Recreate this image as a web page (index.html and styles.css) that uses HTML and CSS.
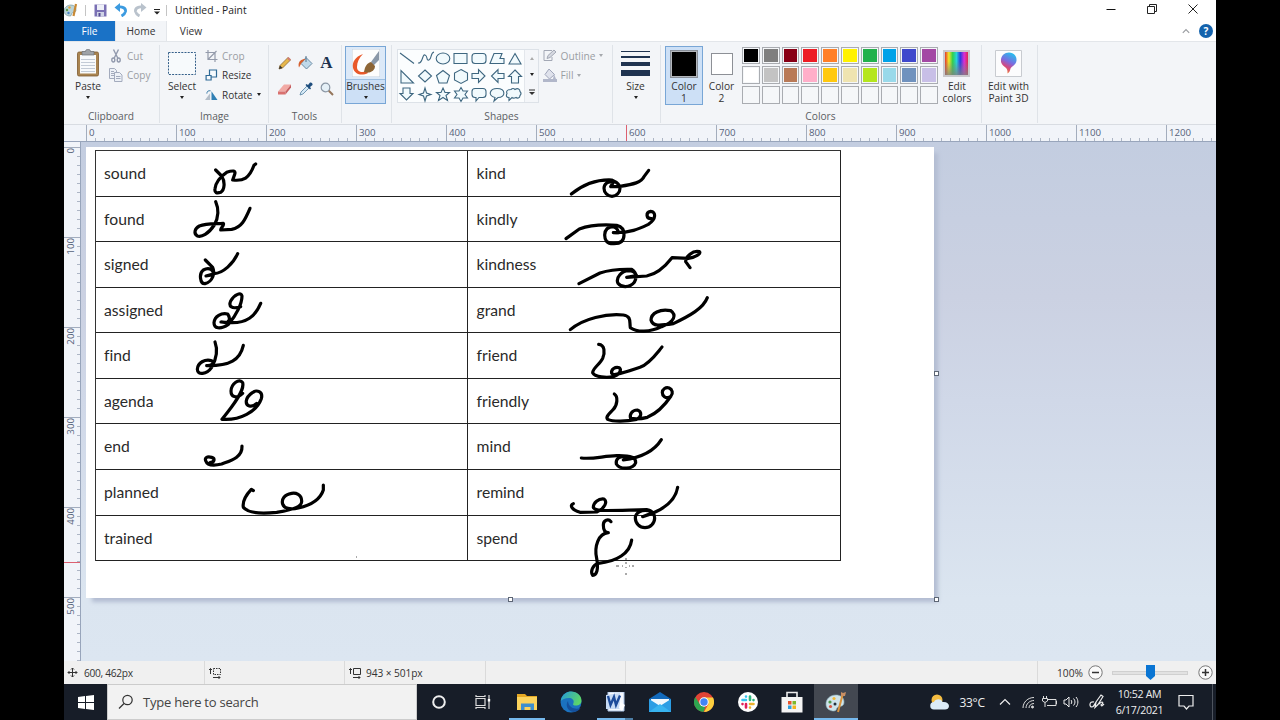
FILE: index.html
```html
<!DOCTYPE html>
<html lang="en">
<head>
  <meta charset="UTF-8">
  <title>Untitled - Paint</title>
  <link rel="stylesheet" href="styles.css">
</head>
<body>
<div class="window">
  <header class="titlebar">
    <svg class="app-icon" width="14" height="14" viewBox="0 0 14 14"><path d="M7 2C3 2 0 5 0 8s3 5 6 5c2 0 1-2 2-3s4 0 4-3-2-5-5-5z" fill="#b9d3d8" stroke="#7d9ba3" stroke-width=".7"/><circle cx="3" cy="7" r="1.2" fill="#5e9d50"/><circle cx="5.500" cy="4.500" r="1.200" fill="#e2a33a"/><circle cx="4.500" cy="10" r="1.200" fill="#4a83c4"/><path d="M12 1L9.500 13" stroke="#c98a35" stroke-width="2.200"/></svg>
    <span class="divider"></span>
    <svg class="save" width="13" height="13" viewBox="0 0 13 13"><path d="M.5.5h12v12h-12z" fill="#7a70b4"/><path d="M3 .5h7v5.500H3z" fill="#eef0f8"/><path d="M3 8h7v4.500H3z" fill="#cfd3e6"/><path d="M4.500 9h2v3.500h-2z" fill="#554b91"/></svg>
    <svg class="undo" width="14" height="14" viewBox="0 0 14 14"><path d="M3 4.500c5-1.500 9 .5 8.500 4-.5 2-2 3.500-4 4.500" fill="none" stroke="#3c9be0" stroke-width="2.800"/><path d="M6 0L.5 4.500 6 9z" fill="#3c9be0"/></svg>
    <svg class="redo" width="14" height="14" viewBox="0 0 14 14"><path d="M11 4.500c-5-1.500-9 .5-8.500 4 .5 2 2 3.500 4 4.500" fill="none" stroke="#b9c2cc" stroke-width="2.800"/><path d="M8 0l5.500 4.500L8 9z" fill="#b9c2cc"/></svg>
    <svg class="more" width="6" height="6" viewBox="0 0 6 6"><path d="M0 .5h6" stroke="#222"/><path d="M0 2.500h6L3 5.500z" fill="#222"/></svg>
    <span class="divider"></span>
    <span class="title">Untitled - Paint</span>
    <div class="controls">
      <svg width="10" height="10" viewBox="0 0 10 10"><path d="M.5 5.500h9" stroke="#111"/></svg>
      <svg width="10" height="10" viewBox="0 0 10 10" fill="none" stroke="#222"><path d="M.5 2.500h7v7h-7z"/><path d="M2.500 2.500v-2h7v7h-2"/></svg>
      <svg width="10" height="10" viewBox="0 0 10 10"><path d="M.5.5l9 9M9.500.5l-9 9" stroke="#222"/></svg>
    </div>
  </header>

  <nav class="tabs">
    <span class="tab file">File</span>
    <span class="tab home">Home</span>
    <span class="tab view">View</span>
    <svg class="collapse" width="8" height="6" viewBox="0 0 8 6"><path d="M.8 4.800L4 1.600l3.200 3.200" fill="none" stroke="#9a9da1" stroke-width="1.200"/></svg>
    <span class="help">?</span>
  </nav>

  <section class="ribbon">
    <div class="group clipboard">
      <div class="group-body">
        <div class="big paste">
          <div class="big-icon"><svg width="24" height="30" viewBox="0 0 24 30"><rect x="1.500" y="3" width="21" height="24" rx="1.500" fill="#a98451" stroke="#7e5a30" stroke-width=".8"/><path d="M4 6h16v18.500H4z" fill="#f8fafc"/><path d="M5 10.500h14M5 13.500h14M5 16.500h14M5 19.500h14M5 22.500h14" stroke="#c3cbd6"/><path d="M6 2.500h3.500c0-3 5-3 5 0H18V6H6z" fill="#9fa3a8" stroke="#6b6e73" stroke-width=".7"/></svg></div>
          <span>Paste</span><i class="arrow"></i>
        </div>
        <div class="rows">
          <div class="row disabled"><svg width="14" height="14" viewBox="0 0 14 14" fill="none" stroke="#9199ad" stroke-width="1.400"><path d="M4.500.5L9 9.500M9.500.5L5 9.500"/><ellipse cx="4.300" cy="11" rx="1.500" ry="2"/><ellipse cx="9.700" cy="11" rx="1.500" ry="2"/></svg>Cut</div>
          <div class="row disabled"><svg width="14" height="14" viewBox="0 0 14 14" fill="#edf1f7" stroke="#a3abbd"><path d="M.5.500h5l2 2v8h-7z"/><path d="M2 3.500h3M2 5.500h3M2 7.500h3"/><path d="M5.500 4.500h5l2.500 2.500v6.500H5.500z"/><path d="M7 8.500h4.500M7 10.500h4.500"/></svg>Copy</div>
        </div>
      </div>
      <div class="group-name">Clipboard</div>
    </div>

    <div class="group image">
      <div class="group-body">
        <div class="big select">
          <div class="big-icon"><svg width="28" height="23" viewBox="0 0 28 23"><rect x=".5" y=".5" width="27" height="22" fill="#f7fafc" stroke="#35608a" stroke-dasharray="2 1.200"/></svg></div>
          <span>Select</span><i class="arrow"></i>
        </div>
        <div class="rows">
          <div class="row disabled"><svg width="12" height="12" viewBox="0 0 12 12" fill="none" stroke="#949bab" stroke-width="1.200"><path d="M2.500 0v9.500H12M0 2.500h9.500V12M2.500 9.500L11 1"/></svg>Crop</div>
          <div class="row"><svg width="12" height="12" viewBox="0 0 12 12" fill="#f6fafd" stroke="#2e6a96" stroke-width="1.200"><path d="M4 1h7v7H4z"/><path d="M.6 6.500h5v4.500h-5z"/></svg>Resize</div>
          <div class="row"><svg width="14" height="12" viewBox="0 0 14 12"><path d="M0 11.500h5.500V4z" fill="#b4bec9"/><path d="M7 11.500V2l6.500 9.500z" fill="#2f7fb4"/><path d="M2 4.500c0-2.500 1.500-3.500 4-3" fill="none" stroke="#3477a5"/></svg>Rotate<i class="arrow"></i></div>
        </div>
      </div>
      <div class="group-name">Image</div>
    </div>

    <div class="group tools">
      <div class="group-body tool-grid">
        <svg width="14" height="14" viewBox="0 0 14 14"><path d="M1 13l1-3.500 8-8 2.500 2.500-8 8z" fill="#e7b74b" stroke="#8b6a3a" stroke-width=".8"/><path d="M1 13l1-3.500L4.500 12z" fill="#333"/><path d="M10.500 1L13 3.500 11.500 5 9 2.500z" fill="#cf7e74"/></svg>
        <svg width="15" height="14" viewBox="0 0 15 14"><path d="M8 1.500l6 6-5.500 5.500L3 7.500z" fill="#bfd9ea" stroke="#5e7f9a" stroke-width=".9"/><path d="M1 11.500C-.5 7 2 3 7.500 3L3.500 7z" fill="#d5602e"/><path d="M8 0v6" stroke="#56758c"/></svg>
        <span class="letter">A</span>
        <svg width="15" height="14" viewBox="0 0 15 14"><path d="M1 9.500L7 2.500h7L8.500 9.500z" fill="#f2aaa5"/><path d="M1 9.500h7.500v3H1z" fill="#d9716f"/><path d="M8.500 9.500L14 2.500v3l-5.500 7z" fill="#c65f60"/></svg>
        <svg width="14" height="14" viewBox="0 0 14 14"><path d="M1 13l1-3L8 4l2 2-6 6z" fill="#d5e9f6" stroke="#54809f" stroke-width=".8"/><path d="M6.500 3L11 7.500 12 6.500l-1-1.500 2.500-2C14 1.500 12.500 0 11 .5L9 3 7.500 2z" fill="#1f4e7e"/></svg>
        <svg width="14" height="14" viewBox="0 0 14 14"><circle cx="5.500" cy="5.500" r="4.300" fill="#e5f0f7" stroke="#8b97a5" stroke-width="1.200"/><path d="M8.800 8.800L13 13" stroke="#94755b" stroke-width="2"/></svg>
      </div>
      <div class="group-name">Tools</div>
    </div>

    <div class="group brushes">
      <div class="group-body">
        <div class="big active">
          <div class="big-icon"><svg width="28" height="28" viewBox="0 0 28 28"><path d="M0 0h28v28H0z" fill="#fdfdfd" stroke="#c3cfdc"/><path d="M11 5C3 8 0 13 1 19c2 7 9 8 15 5l-1-2c-5 2-10 1-10-4s2-9 6-13z" fill="#e9592b"/><path d="M19 13l8-11v9l-6 6z" fill="#8b98a8"/><path d="M12 23c1-6 3-9 7-10l4 4c0 4-4 8-11 6z" fill="#8d6535"/></svg></div>
          <span>Brushes</span><i class="arrow"></i>
        </div>
      </div>
    </div>

    <div class="group shapes">
      <div class="group-body">
        <div class="gallery">
          <!-- 7 x 3 shapes, one every 18px -->
          <svg class="shape-list" width="126" height="54" viewBox="0 0 126 54" fill="#f1fafd" stroke="#3e6780" stroke-width="1.100">
            <path d="M2 3l14 10.500"/>
            <path d="M20 13c5 1 4-9 7-8s1 6 4 5 1-7 5-8" fill="none"/>
            <ellipse cx="45" cy="8.500" rx="6.800" ry="5.500"/>
            <path d="M56 3.500h13v10H56z"/>
            <rect x="74" y="3.500" width="14" height="10" rx="3"/>
            <path d="M92 13.500l4-10h8l-2 5h4v5z"/>
            <path d="M117 3.500l6 10.500h-12z"/>
            <path d="M3 20.500v12.500h12.500z"/>
            <path d="M27 20l6.500 6-6.500 6-6.500-6z"/>
            <path d="M45 20.500l6.500 5-2.500 7.500h-8l-2.500-7.500z"/>
            <path d="M63 19.500l6.500 3.500v7L63 33.500l-6.500-3.500v-7z"/>
            <path d="M74 23.500h6.500v-4l6.500 6.500-6.500 6.500v-4H74z"/>
            <path d="M106 23.500h-6v-4L93.500 26l6.500 6.500v-4h6z"/>
            <path d="M117 20l6.500 6.500h-3V33h-7v-6.500h-3z"/>
            <path d="M5 38h7v5.500h3L8.500 50 2 43.500h3z"/>
            <path d="M27 38l1.500 5L33 44.500 28.500 46 27 51l-1.500-5-4.500-1.500 4.500-1.500z"/>
            <path d="M45 38l2 4.500h4.500L48 45.500l1.500 5-4.500-3-4.500 3 1.500-5-3.500-3H43z"/>
            <path d="M63 37.500l2 3.500h4.500l-2.500 3.500 2.500 3.500H65l-2 3.500-2-3.500h-4.500l2.500-3.500-2.500-3.500H61z"/>
            <path d="M77 38.500h8q3 0 3 3v3q0 3-3 3h-4l-3 3.500v-3.500h-1q-3 0-3-3v-3q0-3 3-3z"/>
            <path d="M97 47.500c-8-2-5-9 2-9 9 0 9 9 1 9l-4 3.500z"/>
            <path d="M113 39.500c2-2 3-1 4 0 3-2 5 0 5 2 2 2 1 3 0 4 0 3-3 3-4 2-2 1-3 1-4 0l-3 3v-3c-3 0-3-2-2-4-1-2 0-4 4-4z"/>
          </svg>
          <div class="scroll">
            <i class="arrow up"></i><i class="arrow"></i><svg width="6" height="7" viewBox="0 0 6 7"><path d="M0 1h6" stroke="#333"/><path d="M0 3h6L3 6z" fill="#333"/></svg>
          </div>
        </div>
        <div class="rows">
          <div class="row disabled"><svg width="14" height="13" viewBox="0 0 14 13" fill="none" stroke="#a3a8b5"><path d="M9 1.500H1v10h8V8"/><path d="M4 9.500l1-3L11 1l2 2-6 5.500z" fill="#d6d9e1"/></svg>Outline<i class="arrow"></i></div>
          <div class="row disabled"><svg width="14" height="14" viewBox="0 0 14 14"><path d="M6 1l5.500 5.500L6.500 11 2 6.500z" fill="#dfe2ec" stroke="#a0a6ba"/><path d="M0 11h14v3H0zM11 6l2 5h-3z" fill="#b1b7ca"/></svg>Fill<i class="arrow"></i></div>
        </div>
      </div>
      <div class="group-name">Shapes</div>
    </div>

    <div class="group size">
      <div class="group-body">
        <div class="big">
          <div class="big-icon"><svg width="29" height="26" viewBox="0 0 29 26" fill="#1f3350"><path d="M0 0h29v1H0zM0 5h29v2H0zM0 11h29v4H0zM0 19h29v6H0z"/></svg></div>
          <span>Size</span><i class="arrow"></i>
        </div>
      </div>
    </div>

    <div class="group colors">
      <div class="group-body">
        <div class="big color-one active">
          <div class="big-icon"><b class="chip black"></b></div>
          <span>Color<br>1</span>
        </div>
        <div class="big color-two">
          <div class="big-icon"><b class="chip white"></b></div>
          <span>Color<br>2</span>
        </div>
        <div class="palette">
          <i></i><i></i><i></i><i></i><i></i><i></i><i></i><i></i><i></i><i></i>
          <i></i><i></i><i></i><i></i><i></i><i></i><i></i><i></i><i></i><i></i>
          <i></i><i></i><i></i><i></i><i></i><i></i><i></i><i></i><i></i><i></i>
        </div>
        <div class="big edit-colors">
          <div class="big-icon"><b class="rainbow"></b></div>
          <span>Edit<br>colors</span>
        </div>
      </div>
      <div class="group-name">Colors</div>
    </div>

    <div class="group paint3d">
      <div class="group-body">
        <div class="big">
          <div class="big-icon"><svg width="27" height="27" viewBox="0 0 27 27"><defs><linearGradient id="drop" x1=".7" y1="0" x2=".3" y2="1"><stop offset="0" stop-color="#22c3ee"/><stop offset=".45" stop-color="#7a6be0"/><stop offset=".7" stop-color="#d4467f"/><stop offset="1" stop-color="#f08a32"/></linearGradient></defs><path d="M.5.500h26v26H.5z" fill="#fcfcfd" stroke="#c8cbd0"/><path d="M14 2.500c5 0 8 4 7.500 8-.5 5-5 5.500-6 8-.5 2-1 4-3 5 0-3 0-4-2-6-2.500-2-5-4-4.500-8C6.500 5.500 9.500 2.500 14 2.500z" fill="url(#drop)"/></svg></div>
          <span>Edit with<br>Paint 3D</span>
        </div>
      </div>
    </div>
  </section>

  <div class="ruler-x">
    <span>0</span><span>100</span><span>200</span><span>300</span><span>400</span><span>500</span><span class="mark">600</span><span>700</span><span>800</span><span>900</span><span>1000</span><span>1100</span><span>1200</span>
  </div>

  <main class="workspace">
    <div class="ruler-y">
      <span><b>0</b></span><span><b>100</b></span><span><b>200</b></span><span><b>300</b></span><span class="mark"><b>400</b></span><span><b>500</b></span>
    </div>
    <div class="stage">
      <div class="canvas">
        <div class="words">
          <div>sound</div><div>kind</div>
          <div>found</div><div>kindly</div>
          <div>signed</div><div>kindness</div>
          <div>assigned</div><div>grand</div>
          <div>find</div><div>friend</div>
          <div>agenda</div><div>friendly</div>
          <div>end</div><div>mind</div>
          <div>planned</div><div>remind</div>
          <div>trained</div><div>spend</div>
        </div>
        <!-- brush strokes -->
        <svg class="ink" width="848" height="451" viewBox="86 147 848 451">
          <g transform="translate(60 140) scale(.33333)">
            <path d="M467 90L485 108C496 125 494 150 482 157C470 161 463 158 465 146C466 130 480 110 500 97C520 90 528 92 524 103L518 120C550 124 568 115 582 76L587 72"/>
            <path d="M467 185C478 210 474 235 463 255C445 282 425 292 412 288C400 280 404 266 418 258C440 250 470 252 490 250C494 256 482 262 482 270L515 268C545 262 555 240 570 205"/>
            <path d="M436 360L458 382C466 400 458 425 435 431C420 432 416 400 430 390C448 380 462 390 460 404L438 408L462 401C490 400 520 370 533 341"/>
            <path d="M542 500C515 508 505 500 512 483C524 462 544 456 546 468C546 490 530 525 505 553C480 570 462 565 462 548C464 528 484 518 503 522C512 535 508 545 500 548L483 546L510 548C560 550 585 530 602 490"/>
          </g>
          <g transform="translate(60 350) scale(.33333)">
            <path d="M465 -24C474 0 470 25 455 52C440 74 412 76 412 58C413 38 435 26 455 32C465 40 455 48 440 47C510 48 540 30 550 -14"/>
            <path d="M548 130C528 148 513 140 513 123C514 100 538 84 548 98C554 120 525 160 486 208C540 212 590 185 604 146C610 124 590 118 577 128C554 144 555 164 568 168C576 170 584 166 590 160"/>
            <path d="M450 338C464 337 466 325 455 322C440 318 434 324 437 332C442 347 460 348 485 342C505 334 548 325 546 288"/>
            <path d="M580 422L574 418C555 438 547 455 550 472C565 492 620 490 650 487C695 480 725 470 725 455C726 432 706 428 695 430C672 434 664 448 668 462C672 475 690 480 715 474C755 465 782 445 790 420L790 405"/>
          </g>
          <g transform="translate(460 145) scale(.33333)">
            <path d="M334 147C370 118 410 103 455 105C467 110 480 118 480 130a24 24 0 1 1 -48 0C432 118 442 107 460 112L452 125L480 124C520 118 545 112 552 95L566 76"/>
            <path d="M318 281L358 252C390 240 430 238 470 241C486 245 493 255 492 270C492 288 480 296 462 296C440 297 434 285 434 270C435 252 445 245 460 245C475 250 475 260 475 264L460 263C510 265 540 250 565 238C590 222 588 200 572 199C556 202 558 222 575 221"/>
            <path d="M357 416L420 384C450 374 480 372 515 373C528 382 532 395 523 412C508 430 484 428 474 415C466 398 485 378 505 377C520 377 525 382 530 392L500 397L560 393C590 387 615 365 636 338L685 340C705 338 725 325 718 320C698 315 677 335 677 350L690 368"/>
            <path d="M331 554C370 520 440 505 490 510C515 514 508 530 511 548C530 562 570 562 605 545C645 530 650 510 632 497C600 490 573 505 573 525C578 545 600 542 640 536C690 512 730 490 742 458"/>
          </g>
          <g transform="translate(460 350) scale(.33333)">
            <path d="M416 -17C435 -15 435 8 428 25C420 42 398 55 398 68C405 82 440 84 460 80C478 75 486 60 478 53C466 49 452 58 455 70C460 80 500 65 540 52C570 40 590 10 606 -9"/>
            <path d="M463 132C475 140 472 165 460 178C450 190 435 200 443 208C460 216 500 214 530 208C546 200 546 185 532 180C515 180 508 195 512 205C530 208 550 205 562 202C590 190 615 165 633 138a15 15 0 1 0 -6 4"/>
            <path d="M364 324C400 328 430 318 470 317C516 316 528 324 527 338C520 358 480 360 469 342C466 325 480 318 495 320L515 322L490 330C550 322 585 300 604 269"/>
            <path d="M340 461C328 465 335 480 360 487L410 486C435 475 443 455 432 447C415 445 400 458 400 472C405 485 430 482 560 479C576 482 584 492 584 504a29 29 0 1 1 -58 0C526 488 545 478 565 482L578 488L548 500C600 485 645 460 653 412"/>
            <path d="M453 515C445 505 430 510 430 525C430 540 435 548 445 548C415 550 402 590 410 625C416 660 410 675 398 676C390 665 398 645 415 640C470 635 510 610 515 570"/>
          </g>
          <path class="dots" d="M356 557h1M616 566h3M622 566h1M629 566h1M632 566h2M626 558v2M626 562v2M626 567v1M626 573v2"/>
        </svg>
        <b class="handle right"></b>
        <b class="handle bottom"></b>
        <b class="handle corner"></b>
      </div>
    </div>
  </main>

  <footer class="status">
    <div class="cell position"><svg width="11" height="11" viewBox="0 0 11 11" fill="none" stroke="#333"><path d="M5.500 1v9M1 5.500h9M4 2.500L5.500 1 7 2.500M4 8.500L5.500 10 7 8.500M2.500 4L1 5.500 2.500 7M8.500 4L10 5.500 8.500 7"/></svg>600, 462px</div>
    <div class="cell selection"><svg width="13" height="12" viewBox="0 0 13 12" fill="none" stroke="#333"><path d="M1.500 7V1.500M0 3l1.500-1.500L3 3M4 10.500h7M9.500 9l1.500 1.500L9.500 12"/><path d="M4.500 1.500h7v6h-7z" stroke-dasharray="1.500 1"/></svg></div>
    <div class="cell dimension"><svg width="13" height="12" viewBox="0 0 13 12" fill="none" stroke="#333"><path d="M1.500 7V1.500M0 3l1.500-1.500L3 3M4 10.500h7M9.500 9l1.500 1.500L9.500 12M4.500 1.500h7v6h-7z"/></svg>943 × 501px</div>
    <div class="cell empty"></div>
    <div class="cell rest"></div>
    <div class="zoom">
      <span>100%</span>
      <svg width="15" height="15" viewBox="0 0 15 15" fill="#fafafa" stroke="#777"><circle cx="7.500" cy="7.500" r="6.700"/><path d="M4 7.500h7" stroke="#333" stroke-width="1.500"/></svg>
      <div class="slider"><svg width="9" height="15" viewBox="0 0 9 15"><path d="M0 0h9v11l-4.500 4L0 11z" fill="#0a75d3"/></svg></div>
      <svg width="15" height="15" viewBox="0 0 15 15" fill="#fafafa" stroke="#777"><circle cx="7.500" cy="7.500" r="6.700"/><path d="M4 7.500h7M7.500 4v7" stroke="#333" stroke-width="1.500"/></svg>
    </div>
  </footer>

  <div class="taskbar">
    <div class="start"><svg width="16" height="15" viewBox="0 0 16 15" fill="#fff"><path d="M0 2l7-1v6H0zM8 .9L16 0v7H8zM0 8h7v6l-7-1zM8 8h8v7l-8-1z"/></svg></div>
    <div class="search"><svg width="16" height="16" viewBox="0 0 16 16" fill="none" stroke="#333" stroke-width="1.200"><circle cx="9.500" cy="6" r="4.700"/><path d="M6 9.500l-5 5"/></svg>Type here to search</div>
    <div class="task"><svg width="16" height="16" viewBox="0 0 16 16"><circle cx="8" cy="8" r="5.800" fill="none" stroke="#eee" stroke-width="2"/></svg></div>
    <div class="task"><svg width="16" height="16" viewBox="0 0 16 16" fill="none" stroke="#ddd" stroke-width="1.200"><path d="M1 4.500h9v7H1zM1 1v1.500h9V1M1 15v-1.500h9V15M14 1v14"/><path d="M12.800 5h2.400v2.500h-2.400z" fill="#fff" stroke="none"/></svg></div>
    <div class="task open"><svg width="20" height="18" viewBox="0 0 20 18"><path d="M0 1h8l2 2h10v14H0z" fill="#e5a823"/><path d="M0 4h20v13H0z" fill="#fbd35d"/><path d="M4 17v-6.500h13V17h-3.500v-3h-6v3z" fill="#3d8fce"/></svg></div>
    <div class="task"><svg width="22" height="22" viewBox="0 0 22 22"><defs><linearGradient id="edge" x1="0" y1="0" x2="1" y2=".4"><stop offset="0" stop-color="#2499dc"/><stop offset="1" stop-color="#5bd56b"/></linearGradient></defs><circle cx="11" cy="11" r="10.500" fill="#1b72bf"/><path d="M.7 10C2 3 7 .5 11 .5c6 0 10.500 4 10.500 9 0 4-3.500 5.500-7 5-2-.3-1.500-1.500-1-2.500 1-3-1.500-5-4.500-5C5 7 2 8.500.7 10z" fill="url(#edge)"/><path d="M8 10c-3 4-.5 10 5.500 11 3 0 6-2 7-4-5 2-12 0-12.500-7z" fill="#15509c"/></svg></div>
    <div class="task open word"><svg width="20" height="20" viewBox="0 0 20 20"><path d="M3 0h16v19H3z" fill="#f6f9fe" stroke="#aec6e8"/><path d="M1 3l14-2v16L1 17z" fill="#c7daf4"/><path d="M3 4l2.500 9L9 5l2 8 4-9.500" fill="none" stroke="#1d4b9a" stroke-width="2.400"/><path d="M15 10l5 3-3 6-3-3z" fill="#fff"/></svg></div>
    <div class="task"><svg width="22" height="20" viewBox="0 0 22 20"><path d="M0 7l11-7 11 7v13H0z" fill="#1269ba"/><path d="M2 7h18v9H2z" fill="#f0f7fc"/><path d="M0 7l11 7 11-7v13H0z" fill="#2b9de4"/><path d="M0 20l11-8 11 8z" fill="#38b4f0"/></svg></div>
    <div class="task"><svg width="20" height="20" viewBox="0 0 20 20"><circle cx="10" cy="10" r="10" fill="#e24435"/><path d="M10 5.500h9A10 10 0 0 1 10 20l4.500-8z" fill="#fdcf3e"/><path d="M1.300 5l5 8 5 2L9.500 20A10 10 0 0 1 1.300 5z" fill="#2da550"/><circle cx="10" cy="10" r="4.700" fill="#fff"/><circle cx="10" cy="10" r="3.700" fill="#4285f4"/></svg></div>
    <div class="task"><svg width="20" height="20" viewBox="0 0 20 20"><circle cx="10" cy="10" r="10" fill="#fff"/><g stroke-width="2.600" stroke-linecap="round"><path d="M8 4.500v.1M4.500 8H8" stroke="#36c5f0"/><path d="M15.500 8v.1M12 4.500V8" stroke="#2eb67d"/><path d="M12 15.500v.1M12 12h3.500" stroke="#ecb22e"/><path d="M4.500 12v.1M8 12v3.500" stroke="#e01e5a"/></g></svg></div>
    <div class="task"><svg width="22" height="22" viewBox="0 0 22 22"><path d="M6 7V1.500h10V7" fill="none" stroke="#eee" stroke-width="1.600"/><path d="M.5 6h21v15.500H.5z" fill="#f4f4f4"/><path d="M7 10h3.500v3.500H7z" fill="#e8542c"/><path d="M11.500 10H15v3.500h-3.500z" fill="#7db82b"/><path d="M7 14.500h3.500V18H7z" fill="#2e9fdc"/><path d="M11.500 14.500H15V18h-3.500z" fill="#f4b41d"/></svg></div>
    <div class="task open current"><svg width="22" height="22" viewBox="0 0 22 22"><path d="M11 4C5 4 1 8 1 13s4 7 8 7c3 0 2-3 4-4s6 0 6-5-4-7-8-7z" fill="#cfe4ea" stroke="#8fb3bf" stroke-width=".6"/><circle cx="5" cy="11" r="1.600" fill="#4f9a4c"/><circle cx="9" cy="7.500" r="1.600" fill="#f0b93b"/><circle cx="5.500" cy="15.500" r="1.600" fill="#d95742"/><circle cx="10" cy="13" r="1.500" fill="#24323c"/><path d="M17.500 4L13 21" stroke="#d9943f" stroke-width="2"/><path d="M16 5V1l2 1 3-1-1 4z" fill="#c98f63"/></svg></div>
    <div class="tray">
      <svg class="weather" width="20" height="16" viewBox="0 0 20 16"><circle cx="7" cy="6" r="5.500" fill="#f5bd41"/><path d="M4 15.500a3.700 3.700 0 0 1 0-7.500c1-3 7-4 8.500 0 4-.5 6.500 1.500 6.500 4s-2 3.500-4 3.500z" fill="#dcebf7"/></svg>
      <span class="temp">33°C</span>
      <svg class="chevron" width="12" height="8" viewBox="0 0 12 8"><path d="M1 6.500l5-5 5 5" fill="none" stroke="#eee" stroke-width="1.200"/></svg>
      <svg class="wifi" width="13" height="13" viewBox="0 0 13 13" fill="none" stroke="#ddd"><path d="M1 12C1 6 6 1.500 12 1.500M4 12c0-4 3.500-7.500 8-7.500M7 12c0-2.500 2-4.500 5-4.500"/><circle cx="10.500" cy="11" r="1" fill="#ddd"/></svg>
      <svg class="battery" width="16" height="12" viewBox="0 0 16 12" fill="none" stroke="#ddd"><path d="M6 3.500h8v6H5M14.500 5v3M1.500 0v2.500M4.500 0v2.500M.5 2.500h5V5L3 6.500.5 5zM3 6.500V11"/></svg>
      <svg class="sound" width="16" height="12" viewBox="0 0 16 12" fill="none" stroke="#eee"><path d="M1 4h2l3-3v10L3 8H1zM8 4c1 1 1 3 0 4M10.500 2.500c2 2 2 5 0 7M13 1c2.500 3 2.500 7 0 10"/></svg>
      <svg class="pen" width="16" height="16" viewBox="0 0 16 16" fill="none" stroke="#eee" stroke-width="1.200"><path d="M5 8c-5-1-5 5-2 5 2 0 2-2 4-5l5-7 2 1.500-5 8-3 3 1-5M10 10c4-4 5-1 2 1 1 2 2 0 3-1"/></svg>
      <div class="clock">10:52 AM<br>6/17/2021</div>
      <svg class="notice" width="16" height="16" viewBox="0 0 16 16"><path d="M1 1.500h14v10.500h-4l-2.500 3-2.500-3H1z" fill="none" stroke="#eee" stroke-width="1.200"/></svg>
      <span class="show-desktop"></span>
    </div>
  </div>
</div>
</body>
</html>
```
FILE: styles.css
```css
* {
  box-sizing: border-box;
  padding: 0;
  margin: 0;
}

body {
  height: 720px;
  overflow: hidden;
  background-color: #000;
  font-family: "Open Sans", "Noto Sans", sans-serif;
  font-size: 10.2px;
  color: #333;
}

svg {
  display: block;
  flex: none;
}

.window {
  display: flex;
  flex-direction: column;
  width: 1152px;
  height: 720px;
  margin: 0 auto;
  background-color: #fff;
}

/* title bar */
.titlebar {
  display: flex;
  align-items: center;
  height: 21px;
  padding-bottom: 1px;
}

.app-icon {
  margin-right: 7px;
}

.divider {
  width: 1px;
  height: 11px;
  background-color: #c4c4c4;
}

.save {
  margin-left: 8px;
}

.undo {
  margin-left: 7px;
}

.redo {
  margin-left: 5px;
}

.more {
  margin: 3px 6px 0 7px;
}

.title {
  margin-left: 8px;
  color: #222;
  font-size: 10.3px;
}

.controls {
  display: flex;
  gap: 31px;
  margin: -2px 18px 0 auto;
}

/* tabs */
.tabs {
  display: flex;
  align-items: center;
  height: 20px;
}

.tab {
  height: 20px;
  line-height: 20px;
  text-align: center;
}

.file {
  width: 51px;
  background-color: #1a72c6;
  color: #fff;
}

.home {
  width: 52px;
  height: 21px;
  background-color: #f3f5f8;
  border: 1px solid #e3e6ea;
  border-width: 0 1px;
}

.view {
  width: 48px;
}

.collapse {
  margin-left: auto;
}

.help {
  width: 14px;
  height: 14px;
  margin: 0 3px 0 9px;
  background-color: #1463ad;
  border-radius: 50%;
  line-height: 14px;
  text-align: center;
  font-weight: bold;
  color: #fff;
}

/* ribbon */
.ribbon {
  display: flex;
  height: 84px;
  background-color: #f3f5f8;
  border-top: 1px solid #e3e6ea;
  border-bottom: 1px solid #d8dce2;
}

.group {
  display: flex;
  flex-direction: column;
  background: linear-gradient(#dfe3e8, #dfe3e8) right 3px / 1px 78px no-repeat;
}

.group-body {
  display: flex;
  height: 66px;
  padding-top: 4px;
}

.group-name {
  height: 16px;
  line-height: 16px;
  text-align: center;
  color: #5b5e63;
}

.clipboard {
  width: 96px;
}

.clipboard .group-name {
  padding-right: 2px;
}

.image {
  width: 109px;
}

.tools {
  width: 73px;
}

.tools .group-name {
  padding-right: 2px;
}

.brushes {
  width: 50px;
}

.shapes {
  width: 221px;
}

.size {
  width: 48px;
}

.colors {
  width: 321px;
}

.colors .group-name {
  padding-right: 2px;
}

.paint3d {
  width: 56px;
}

.big {
  display: flex;
  flex-direction: column;
  align-items: center;
  width: 44px;
  line-height: 11.5px;
  text-align: center;
}

.big-icon {
  display: flex;
  align-items: center;
  justify-content: center;
  height: 35px;
}

.arrow {
  width: 0;
  border: 2.5px solid transparent;
  border-top: 3px solid #222;
  border-bottom: 0;
}

.big .arrow {
  margin-top: 3px;
}

.active {
  background-color: #cde0f6;
  border: 1px solid #78a6d6;
}

.active .big-icon {
  height: 34px;
}

.rows {
  display: flex;
  flex-direction: column;
}

.row {
  display: flex;
  align-items: center;
  gap: 4px;
  height: 19.6px;
  font-size: 10px;
}

.row svg {
  width: 14px;
}

.disabled {
  color: #9a9da3;
}

.disabled .arrow {
  border-top-color: #a5a8ad;
}

.paste {
  width: 45px;
  padding-left: 3px;
}

.select {
  width: 44px;
}

.image .row svg {
  margin-left: 1px;
  width: 13px;
}

.tool-grid {
  display: grid;
  grid-template-columns: repeat(3, 21px);
  grid-template-rows: repeat(2, 26px);
  align-items: center;
  justify-content: center;
  justify-items: center;
  padding: 8px 0 0;
}

.letter {
  font: bold 17px "Liberation Serif", serif;
  color: #20324e;
}

.brushes .big {
  width: 41px;
  height: 58px;
  margin-left: 3px;
}

.brushes .big-icon {
  width: 100%;
  height: 33px;
  margin-bottom: 1px;
  background-color: #dce9f8;
  border-bottom: 1px solid #9ebfe0;
}

.gallery {
  display: flex;
  height: 54px;
  margin: 3px 4px 0 5px;
  background-color: #fbfdfe;
  border: 1px solid #dde2e8;
}

.scroll {
  display: flex;
  flex-direction: column;
  align-items: center;
  justify-content: space-around;
  width: 14px;
  background-color: #f4f6f9;
  border-left: 1px solid #e3e7ec;
}

.scroll .up {
  border-top: 0;
  border-bottom: 3px solid #aaa;
}

.shapes .row {
  gap: 3.5px;
  font-size: 10.2px;
}

.shapes .group-name {
  padding-right: 2px;
}

.size .big {
  width: 45px;
}

.color-one {
  width: 38px;
  height: 59px;
  margin-left: 4px;
}

.color-two {
  width: 37px;
}

.chip {
  width: 22px;
  height: 22px;
  border: 1px solid #8d9096;
}

.black {
  width: 28px;
  height: 28px;
  background-color: #000;
  border: 1px solid #888f99;
  box-shadow: inset 0 0 0 1px #b4b7bc;
}

.white {
  background-color: #fff;
}

.palette {
  display: grid;
  grid-template-columns: repeat(10, 17.8px);
  grid-auto-rows: 17.8px;
  gap: 2px;
  height: 58px;
  margin: .5px 0 0 2px;
}

.palette i {
  background-color: #f5f7f9;
  border: 1px solid #a9acb1;
  box-shadow: inset 0 0 0 1px #f5f7f9;
}

.palette i:nth-child(1) { background-color: #000; }
.palette i:nth-child(2) { background-color: #7f7f7f; }
.palette i:nth-child(3) { background-color: #880015; }
.palette i:nth-child(4) { background-color: #ed1c24; }
.palette i:nth-child(5) { background-color: #ff7f27; }
.palette i:nth-child(6) { background-color: #fff200; }
.palette i:nth-child(7) { background-color: #22b14c; }
.palette i:nth-child(8) { background-color: #00a2e8; }
.palette i:nth-child(9) { background-color: #3f48cc; }
.palette i:nth-child(10) { background-color: #a349a4; }
.palette i:nth-child(11) { background-color: #fff; }
.palette i:nth-child(12) { background-color: #c3c3c3; }
.palette i:nth-child(13) { background-color: #b97a57; }
.palette i:nth-child(14) { background-color: #ffaec9; }
.palette i:nth-child(15) { background-color: #ffc90e; }
.palette i:nth-child(16) { background-color: #efe4b0; }
.palette i:nth-child(17) { background-color: #b5e61d; }
.palette i:nth-child(18) { background-color: #99d9ea; }
.palette i:nth-child(19) { background-color: #7092be; }
.palette i:nth-child(20) { background-color: #c8bfe7; }

.edit-colors {
  width: 38px;
}

.rainbow {
  width: 27px;
  height: 27px;
  border: 2px solid #c8c8cb;
  background: linear-gradient(transparent 40%, rgba(128, 128, 128, .8)),
    linear-gradient(90deg, #e3362c, #f4e62b, #2fd04d, #27d3d8, #2b3be0, #d92fd8, #e02a4c);
}

.paint3d .big {
  width: 53px;
}

/* rulers */
.ruler-x {
  display: flex;
  height: 17px;
  padding-left: 22px;
  overflow: hidden;
  background: repeating-linear-gradient(90deg, #adb6c5 0 1px, transparent 1px 9px) 22px 13px / 100% 3px no-repeat #f1f4f9;
  border-bottom: 1px solid #98a5bb;
}

.ruler-x span {
  flex: none;
  width: 90px;
  padding-left: 2px;
  border-left: 1px solid #a3adbd;
  font-size: 9.7px;
  line-height: 15px;
  color: #55627a;
}

.ruler-x .mark {
  border-left-color: #dc6070;
}

.workspace {
  display: flex;
  height: 519px;
}

.ruler-y {
  width: 17px;
  padding-top: 5px;
  overflow: hidden;
  background: repeating-linear-gradient(#adb6c5 0 1px, transparent 1px 9px) 13px 5px / 3px 100% no-repeat #f1f4f9;
  border-right: 1px solid #98a5bb;
}

.ruler-y span {
  display: block;
  height: 90px;
  border-top: 1px solid #a3adbd;
}

.ruler-y b {
  display: block;
  width: 14px;
  font-size: 9.7px;
  font-weight: normal;
  line-height: 14px;
  color: #55627a;
  writing-mode: vertical-rl;
  transform: rotate(180deg);
}

.ruler-y .mark {
  background: linear-gradient(#dc6070, #dc6070) 0 54px / 100% 1px no-repeat;
}

/* drawing */
.stage {
  flex: 1;
  padding: 5px 0 0 5px;
  background: linear-gradient(#c3cde0, #cbd1e2 30%, #d0d8e8 50%, #dbe5f0 88%, #dce6f1);
}

.canvas {
  position: relative;
  width: 848px;
  height: 451px;
  padding: 3px 0 0 9px;
  background-color: #fff;
  box-shadow: 5px 5px 4px -1px #b3bdd2;
}

.words {
  display: grid;
  grid-template-columns: 372px 373px;
  grid-template-rows: 46px 45px 46px 45px 46px 45px 46px 46px 45px;
  width: 746px;
  border: 1px solid #333;
  border-width: 1px 0 0 1px;
}

.words div {
  padding: 0 0 0 8px;
  border: 1px solid #222;
  border-width: 0 1px 1px 0;
  font-family: Lato, sans-serif;
  font-size: 15.7px;
  font-variant-ligatures: none;
  line-height: 44px;
  color: #2a2a2a;
}

.words div:nth-child(even) {
  padding-left: 8.5px;
}

.ink {
  position: absolute;
  top: 0;
  left: 0;
  fill: none;
  stroke: #000;
  stroke-width: 9.6;
  stroke-linecap: round;
  stroke-linejoin: round;
}

.dots {
  stroke: #555;
  stroke-width: 1;
  stroke-linecap: butt;
}

.handle {
  position: absolute;
  width: 5px;
  height: 5px;
  background-color: #fff;
  border: 1px solid #5d6675;
}

.right {
  top: 224px;
  right: -5px;
}

.bottom {
  bottom: -4px;
  left: 422px;
}

.corner {
  right: -5px;
  bottom: -4px;
}

/* status bar */
.status {
  display: flex;
  height: 23px;
  background-color: #f0f0f0;
}

.cell {
  display: flex;
  align-items: center;
  gap: 6px;
  width: 140.5px;
  padding-left: 3px;
  border-right: 1px solid #dadada;
  letter-spacing: -.3px;
}

.selection,
.dimension {
  padding-left: 4px;
}

.dimension {
  gap: 4px;
  letter-spacing: -.1px;
}

.rest {
  flex: 1;
}

.zoom {
  display: flex;
  align-items: center;
  width: 178px;
  padding-left: 19px;
}

.zoom span {
  width: 31px;
}

.slider {
  display: flex;
  align-items: center;
  justify-content: center;
  width: 76px;
  height: 4px;
  margin: 0 10px 0 9px;
  background-color: #e2e2e2;
  border: 1px solid #d0d0d0;
}

/* taskbar */
.taskbar {
  display: flex;
  height: 36px;
  background-color: #171d28;
}

.start {
  display: flex;
  align-items: center;
  justify-content: center;
  width: 43px;
}

.search {
  display: flex;
  align-items: center;
  gap: 9px;
  width: 309.6px;
  padding: 0 0 0 10px;
  background-color: #f2f2f2;
  border: 1px solid #ccc;
  font-size: 13px;
  letter-spacing: -.22px;
  color: #444;
}

.task {
  display: flex;
  align-items: center;
  justify-content: center;
  width: 44.2px;
}

.open {
  background: linear-gradient(#76b9ed, #76b9ed) center bottom / 36px 2px no-repeat;
}

.word {
  background-image: linear-gradient(90deg, #76b9ed 78%, #4d7ea6 78%);
}

.current {
  background-color: #434851;
  background-size: 100% 2px;
}

.tray {
  display: flex;
  flex: 1;
  align-items: center;
  color: #eee;
}

.weather {
  margin-left: 72px;
}

.temp {
  width: 38px;
  padding-left: 9px;
  font-size: 12px;
  letter-spacing: -.3px;
}

.chevron {
  margin-left: 11px;
}

.wifi {
  margin-left: 11px;
}

.battery {
  margin-left: 7px;
}

.sound {
  margin-left: 5px;
}

.pen {
  margin-left: 10px;
}

.clock {
  width: 56px;
  margin-left: 6px;
  font-size: 10.6px;
  line-height: 16px;
  letter-spacing: -.3px;
  text-align: center;
  white-space: nowrap;
}

.notice {
  margin-left: 11px;
}

.show-desktop {
  width: 1px;
  height: 36px;
  margin: 0 3px 0 auto;
  background-color: #4d535d;
}
```
